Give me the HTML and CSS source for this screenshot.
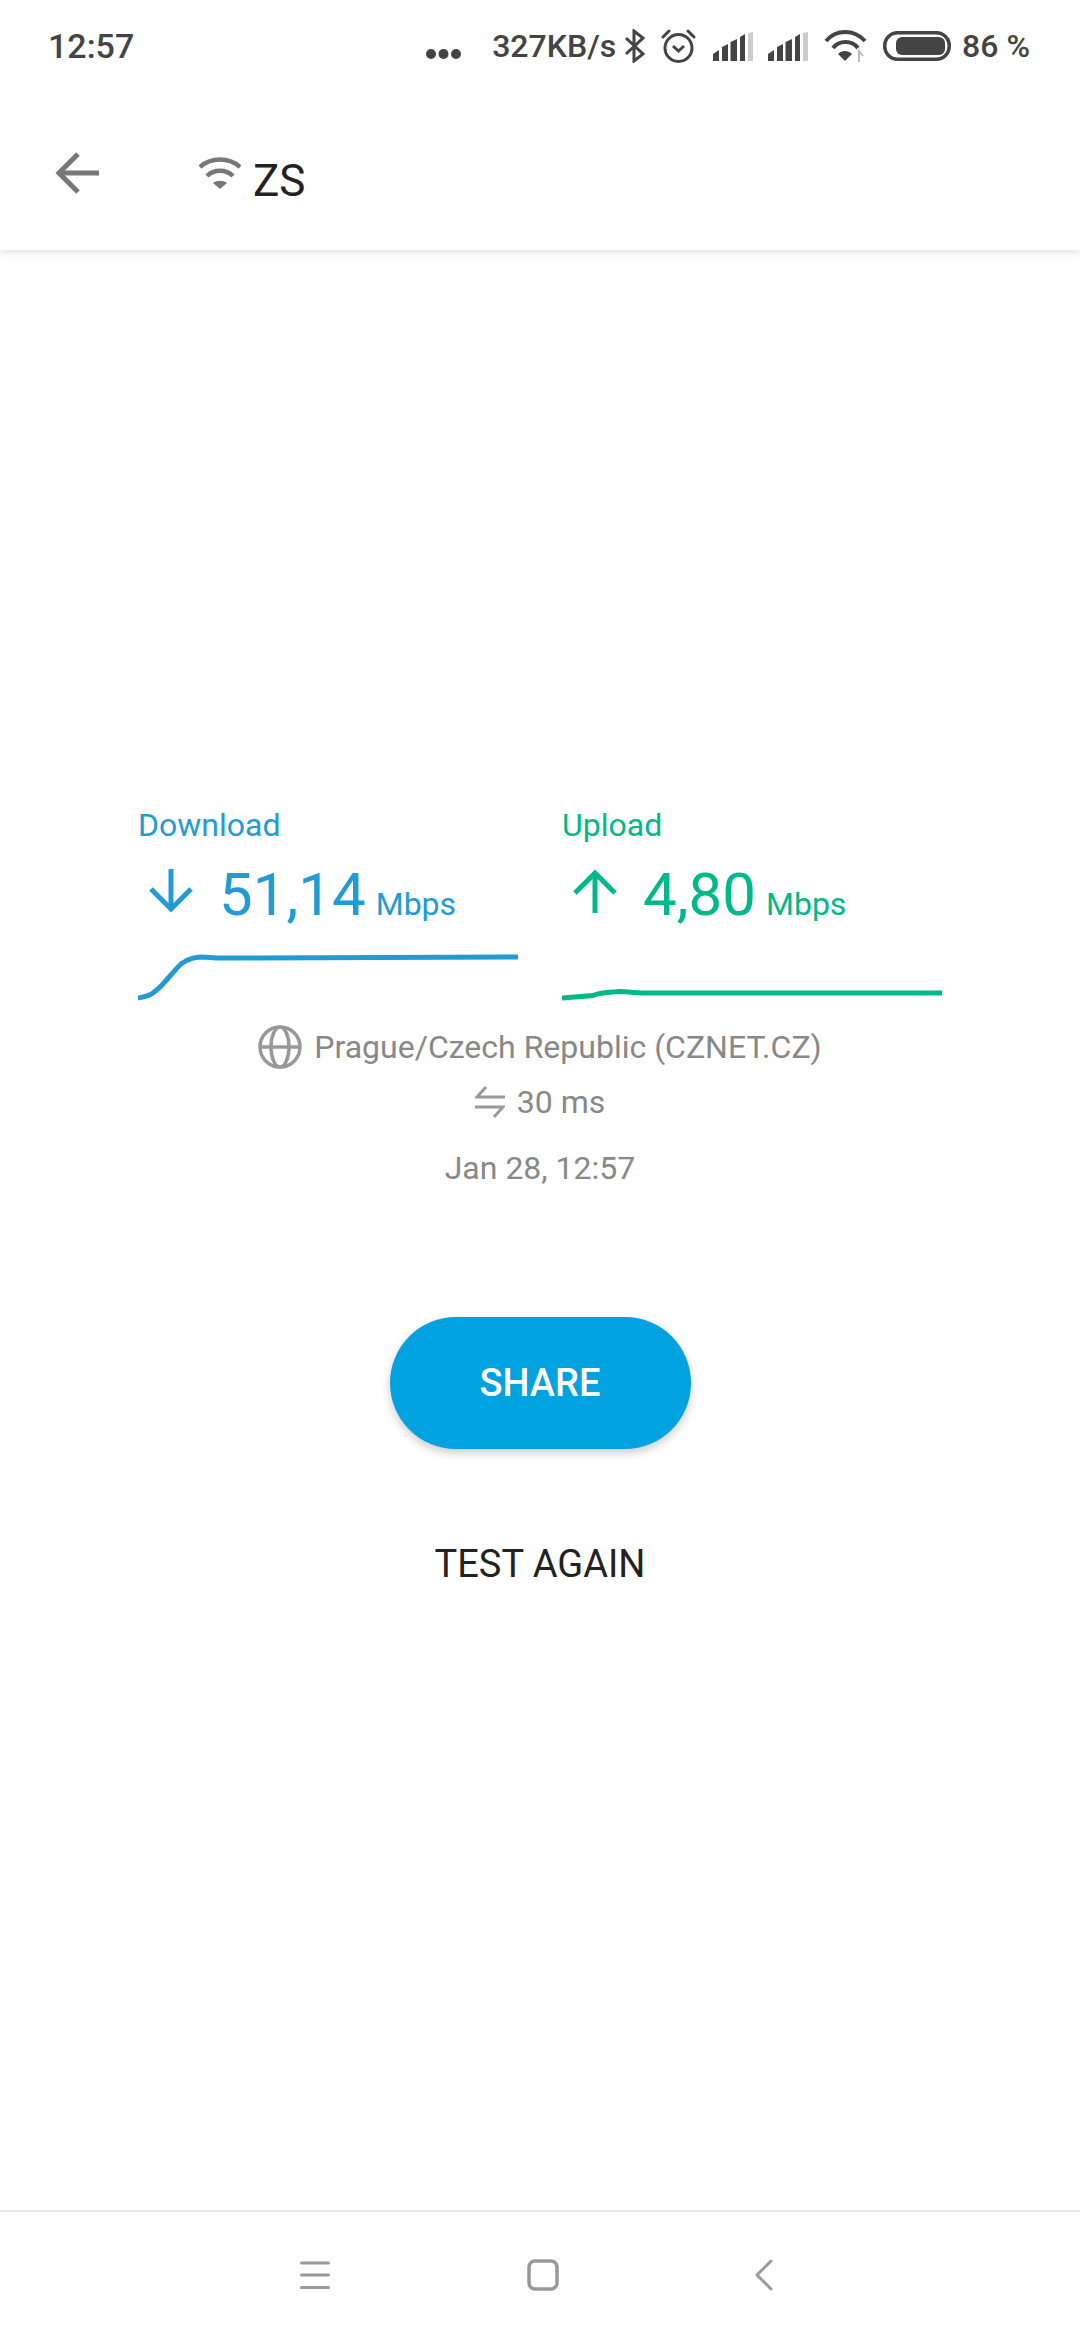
FILE: index.html
```html
<!DOCTYPE html>
<html lang="en">
<head>
    <meta charset="UTF-8">
    <meta name="viewport" content="width=device-width, initial-scale=1.0">
    <title>Speed test result</title>
    <link rel="stylesheet" href="styles.css">
</head>
<body>

<header class="top-bar">
    <div class="status-bar">
        <span class="clock">12:57</span>
        <div class="status-icons">
            <svg class="status-dots" width="35" height="10" viewBox="0 0 35 10"><circle cx="5" cy="5" r="5"/><circle cx="17.5" cy="5" r="5"/><circle cx="30" cy="5" r="5"/></svg>
            <span class="net-speed">327KB/s</span>
            <svg class="status-bt" width="21" height="34" viewBox="0 0 21 34" fill="none" stroke="#444" stroke-width="3"><path d="M2 9 L19 25 L10 32 V2 L19 9 L2 25"/></svg>
            <svg class="status-alarm" width="35" height="34" viewBox="0 0 35 34" fill="none" stroke="#444" stroke-width="3"><circle cx="17.5" cy="19" r="13.5"/><path d="M12 17 L17.5 22 L23 17"/><path d="M2 8 L8 2 M33 8 L27 2" stroke-linecap="round"/></svg>
            <svg class="status-signal" width="40" height="29" viewBox="0 0 40 29"><path fill="#444" d="M0 22 L6 18 V29 H0 Z M9 15 L15 12 V29 H9 Z M17.500 10 L24 7 V29 H17.500 Z M27 5 L32 2 V29 H27 Z"/><path fill="#ccc" d="M35 1 L40 0 V29 H35 Z"/></svg>
            <svg class="status-signal-2" width="40" height="29" viewBox="0 0 40 29"><path fill="#444" d="M0 22 L6 18 V29 H0 Z M9 15 L15 12 V29 H9 Z M17.500 10 L24 7 V29 H17.500 Z M27 5 L32 2 V29 H27 Z"/><path fill="#ccc" d="M35 1 L40 0 V29 H35 Z"/></svg>
            <svg class="status-wifi" width="43" height="32" viewBox="0 0 43 32" fill="none" stroke="#444" stroke-width="4"><path d="M2 11 C12 -1 30 -1 41 11"/><path d="M9 18 C15 10 28 10 34 18"/><path fill="#444" stroke="none" d="M14 24 C18 20 24 20 28 24 L21 31 Z"/><path stroke="#bbb" stroke-width="2" d="M35 32 V21 L39 26"/></svg>
            <svg class="status-battery" width="68" height="30" viewBox="0 0 68 30"><rect x="1.750" y="1.750" width="64.500" height="26.500" rx="13" fill="none" stroke="#444" stroke-width="3.500"/><rect x="13" y="6" width="49" height="18" rx="6" fill="#444"/></svg>
            <span class="battery-level">86 %</span>
        </div>
    </div>
    <div class="toolbar">
        <svg class="back-arrow" width="44" height="42" viewBox="0 0 44 42" fill="none" stroke="#777" stroke-width="5"><path d="M44 21 H4"/><path d="M23 2 L4 21 L23 40"/></svg>
        <svg class="network-icon" width="42" height="33" viewBox="0 0 42 33" fill="none" stroke="#777" stroke-width="4.500"><path d="M1 11 C12 1 30 1 41 11"/><path d="M8 20 C15 13 27 13 34 20"/><path fill="#777" stroke="none" d="M14 27 C18 24 24 24 28 27 L21 33 Z"/></svg>
        <span class="network-name">ZS</span>
    </div>
</header>

<main class="content">
    <div class="results">
        <section class="result result-down">
            <div class="result-label">Download</div>
            <div class="result-value">
                <svg class="result-arrow" width="44" height="44" viewBox="0 0 44 44" fill="none" stroke="currentColor" stroke-width="5"><path d="M22 0 V41"/><path d="M2 20 L22 40 L42 20"/></svg>
                <span class="result-number">51,14</span>
                <span class="result-unit">Mbps</span>
            </div>
            <svg class="result-chart" width="380" height="55" viewBox="0 0 380 55" fill="none" stroke="currentColor" stroke-width="5"><path d="M0 48 C8 47 12 45 15 43 C19 40 22 37 25 34 C30 28 34 24 39 18 C44 12 50 8 62 7 C68 7 76 8 82 8 C140 8 220 7 380 7"/></svg>
        </section>
        <section class="result result-up">
            <div class="result-label">Upload</div>
            <div class="result-value">
                <svg class="result-arrow" width="44" height="44" viewBox="0 0 44 44" fill="none" stroke="currentColor" stroke-width="5"><path d="M22 44 V3"/><path d="M2 24 L22 4 L42 24"/></svg>
                <span class="result-number">4,80</span>
                <span class="result-unit">Mbps</span>
            </div>
            <svg class="result-chart" width="380" height="55" viewBox="0 0 380 55" fill="none" stroke="currentColor" stroke-width="5"><path d="M0 48 L31 45.500 C36 43 42 42.500 58 41.500 C66 41.500 72 43 80 43 C100 42.500 160 43 380 43"/></svg>
        </section>
    </div>

    <div class="test-info">
        <div class="info-row">
            <svg class="info-globe" width="44" height="44" viewBox="0 0 44 44" fill="none" stroke="#999" stroke-width="3.500"><circle cx="22" cy="22" r="20"/><ellipse cx="22" cy="22" rx="9" ry="20"/><path d="M2 22 H42"/></svg>
            <span>Prague/Czech Republic (CZNET.CZ)</span>
        </div>
        <div class="info-row info-ping">
            <svg class="info-swap" width="30" height="32" viewBox="0 0 30 32" fill="none" stroke="#999" stroke-width="3"><path d="M30 11 H2 L11 1"/><path d="M0 21 H28 L19 31"/></svg>
            <span>30 ms</span>
        </div>
        <div class="info-row info-date">Jan 28, 12:57</div>
    </div>

    <button class="btn-share" type="button">SHARE</button>
    <button class="btn-again" type="button">TEST AGAIN</button>
</main>

<nav class="nav-bar">
    <svg class="nav-menu" width="30" height="28" viewBox="0 0 30 28" stroke="#999" stroke-width="3" stroke-linecap="round"><path d="M1.500 2 H28.500 M1.500 14 H28.500 M1.500 26.500 H28.500"/></svg>
    <svg class="nav-home" width="32" height="32" viewBox="0 0 32 32" fill="none" stroke="#999" stroke-width="3.500"><rect x="2" y="2" width="28" height="28" rx="6"/></svg>
    <svg class="nav-back" width="18" height="32" viewBox="0 0 18 32" fill="none" stroke="#999" stroke-width="3" stroke-linecap="round" stroke-linejoin="round"><path d="M16 2 L2 16 L16 30"/></svg>
</nav>

</body>
</html>
```

FILE: styles.css
```css
* {
    box-sizing: border-box;
}
html, body {
    height: 100%;
}
body {
    font-family: 'Roboto', 'Liberation Sans', sans-serif;
    background: white;
    margin: 0;
    width: 1080px;
    height: 2340px;
    display: flex;
    flex-direction: column;
    overflow: hidden;
}
svg {
    display: block;
    flex-shrink: 0;
}

/* top bar */
.top-bar {
    height: 250px;
    background: white;
    box-shadow: 0 2px 8px rgba(0, 0, 0, 0.14);
    position: relative;
}
.status-bar {
    height: 92px;
    padding: 0 50px 0 48px;
    display: flex;
    justify-content: space-between;
    align-items: center;
    color: #444;
}
.clock {
    font-size: 34px;
    font-weight: 500;
}
.status-icons {
    display: flex;
    align-items: center;
}
.status-dots {
    fill: #444;
    margin-top: 16px;
}
.net-speed,
.battery-level {
    font-size: 32px;
    font-weight: 500;
}
.net-speed {
    margin-left: 31px;
}
.status-bt {
    margin-left: 8px;
}
.status-alarm {
    margin-left: 16px;
}
.status-signal {
    margin-left: 17px;
}
.status-signal-2 {
    margin-left: 15px;
}
.status-wifi {
    margin-left: 16px;
}
.status-battery {
    margin-left: 16px;
}
.battery-level {
    margin-left: 11px;
}
.toolbar {
    height: 158px;
    padding-left: 55px;
    display: flex;
    align-items: flex-start;
}
.back-arrow {
    margin-top: 60px;
}
.network-icon {
    margin-left: 100px;
    margin-top: 64px;
}
.network-name {
    margin-left: 12px;
    margin-top: 63px;
    font-size: 44px;
    line-height: 52px;
    color: #222;
}

/* results */
.content {
    flex: 1;
    display: flex;
    flex-direction: column;
    align-items: center;
}
.results {
    width: 100%;
    padding: 555px 0 0 138px;
    display: flex;
    gap: 44px;
}
.result {
    width: 380px;
}
.result-down {
    color: #229bd5;
}
.result-up {
    color: #00b98a;
}
.result-label {
    font-size: 32px;
    line-height: 40px;
}
.result-value {
    display: flex;
    align-items: baseline;
    height: 76px;
    margin-top: 12px;
    padding-left: 11px;
}
.result-arrow {
    align-self: flex-start;
    margin-top: 12px;
}
.result-number {
    font-size: 60px;
    line-height: 76px;
    margin-left: 26px;
}
.result-unit {
    font-size: 32px;
    margin-left: 10px;
}
.result-chart {
    margin-top: 17px;
}

/* server, ping and date */
.test-info {
    margin-top: 20px;
    font-size: 32px;
    color: #888;
    display: flex;
    flex-direction: column;
    align-items: center;
}
.info-row {
    display: flex;
    align-items: center;
    gap: 12px;
    height: 44px;
}
.info-ping {
    margin-top: 11px;
}
.info-date {
    margin-top: 22px;
}

/* buttons */
button {
    font-family: inherit;
    border: none;
    background: none;
    padding: 0;
    cursor: pointer;
}
.btn-share {
    margin-top: 127px;
    width: 301px;
    height: 132px;
    border-radius: 66px;
    background-color: #02a1e0;
    color: white;
    font-size: 38px;
    font-weight: 500;
    box-shadow: 0 4px 10px rgba(0, 0, 0, 0.2);
}
.btn-again {
    margin-top: 90px;
    font-size: 38px;
    line-height: 50px;
    color: #222;
}

/* bottom navigation */
.nav-bar {
    height: 130px;
    border-top: 2px solid #e8e8e8;
    position: relative;
    display: flex;
    align-items: center;
    padding: 0 307px 2px 300px;
    justify-content: space-between;
}
```
